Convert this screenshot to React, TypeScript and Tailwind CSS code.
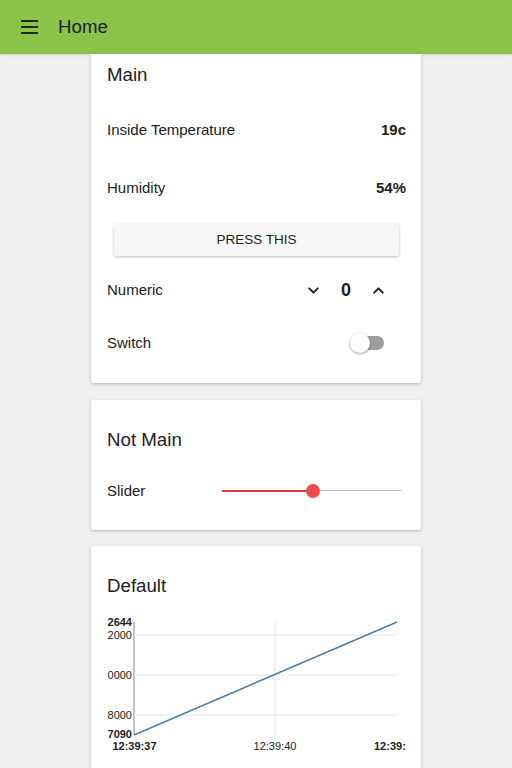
import { ChevronDown, ChevronUp } from 'lucide-react';

const font = { fontFamily: '"Liberation Sans", Arial, sans-serif' };

function Row({ label, value }: { label: string; value: string }) {
    return (
        <div className="flex h-[58px] items-center justify-between text-[15px] text-[#212121]">
            <span>{label}</span>
            <span className="mr-[-1px] font-bold">{value}</span>
        </div>
    );
}

function Chart() {
    const gridY = [25, 65, 105];
    return (
        <svg width="330" height="150" className="-ml-4 block" style={font}>
            <line x1="43" y1="12" x2="43" y2="125" stroke="#888" strokeWidth="1" />
            {gridY.map((y) => (
                <line key={y} x1="43" y1={y} x2="306" y2={y} stroke="#e6e6e6" strokeWidth="1" />
            ))}
            <line x1="184" y1="12" x2="184" y2="125" stroke="#e6e6e6" strokeWidth="1" />
            <line x1="43" y1="125" x2="306" y2="12" stroke="#4a7fa8" strokeWidth="1.5" />
            <g fontSize="11" fill="#222" textAnchor="end">
                <text x="41" y="16" fontWeight="bold">2644</text>
                <text x="41" y="29">2000</text>
                <text x="41" y="69">0000</text>
                <text x="41" y="109">8000</text>
                <text x="41" y="128" fontWeight="bold">7090</text>
            </g>
            <g fontSize="11" fill="#222">
                <text x="43.5" y="140" textAnchor="middle" fontWeight="bold">12:39:37</text>
                <text x="184" y="140" textAnchor="middle">12:39:40</text>
                <text x="283" y="140" fontWeight="bold">12:39:</text>
            </g>
        </svg>
    );
}

export default function App() {
    return (
        <div className="min-h-[768px] bg-[#efefef]" style={font}>
            <header className="flex h-[54px] items-center bg-[#8bc34a] shadow-sm">
                <div className="ml-[21px] flex w-[17px] flex-col gap-[4px]">
                    <span className="h-[2px] bg-[#1e2a14]" />
                    <span className="h-[2px] bg-[#1e2a14]" />
                    <span className="h-[2px] bg-[#1e2a14]" />
                </div>
                <h1 className="ml-[20px] text-[18.7px] text-[#1a1a1a]">Home</h1>
            </header>

            <main className="mx-auto flex w-[330px] flex-col gap-[16px]">
                <section className="rounded-b-[2px] bg-white px-4 pb-[20px] shadow-[0_1px_3px_rgba(0,0,0,0.25)]">
                    <h2 className="flex h-[42px] items-center text-[18.7px] text-[#212121]">Main</h2>
                    <div className="mt-[5px]">
                        <Row label="Inside Temperature" value="19c" />
                        <Row label="Humidity" value="54%" />
                    </div>
                    <button className="mx-[7px] mt-[7px] flex h-[32px] w-[285px] items-center justify-center rounded-[2px] bg-[#f7f7f7] text-[13.5px] text-[#212121] shadow-[0_1px_3px_rgba(0,0,0,0.25)]">
                        PRESS THIS
                    </button>
                    <div className="mt-[14px] flex h-[40px] items-center justify-between text-[15px] text-[#212121]">
                        <span>Numeric</span>
                        <div className="mr-[18px] flex items-center gap-[18px]">
                            <ChevronDown className="size-[17px]" strokeWidth={2.8} />
                            <span className="w-[12px] text-center text-[18px] font-bold">0</span>
                            <ChevronUp className="size-[17px]" strokeWidth={2.8} />
                        </div>
                    </div>
                    <div className="mt-[13px] flex h-[40px] items-center justify-between text-[15px] text-[#212121]">
                        <span>Switch</span>
                        <div className="relative mr-[21px] h-[14px] w-[34px] rounded-full bg-[#9e9e9e]">
                            <span className="absolute left-0 top-[-3px] size-[20px] rounded-full bg-white shadow-[0_1px_3px_rgba(0,0,0,0.4)]" />
                        </div>
                    </div>
                </section>

                <section className="mt-px rounded-[2px] bg-white px-4 pb-[24px] pt-[28px] shadow-[0_1px_3px_rgba(0,0,0,0.25)]">
                    <h2 className="h-[24px] text-[18.7px] leading-[24px] text-[#212121]">Not Main</h2>
                    <div className="mt-[24px] flex h-[30px] items-center text-[15px] text-[#212121]">
                        <span className="w-[115px]">Slider</span>
                        <div className="relative mr-[3px] flex h-[2px] flex-1">
                            <div className="h-[2px] w-[91px] bg-[#e53935]" />
                            <div className="h-[1px] flex-1 bg-[#bdbdbd]" />
                            <span className="absolute left-[84px] top-[-6px] size-[14px] rounded-full bg-[#f04b4b]" />
                        </div>
                    </div>
                </section>

                <section className="h-[260px] rounded-[2px] bg-white px-4 pt-[28px] shadow-[0_1px_3px_rgba(0,0,0,0.25)]">
                    <h2 className="h-[24px] text-[18.7px] leading-[24px] text-[#212121]">Default</h2>
                    <div className="mt-[12px]">
                        <Chart />
                    </div>
                </section>
            </main>
        </div>
    );
}
